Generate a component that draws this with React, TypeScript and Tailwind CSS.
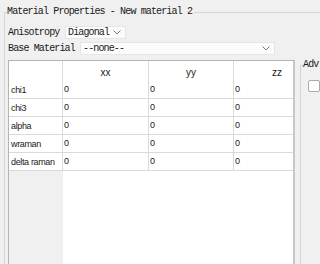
import React from "react";

const mono = "font-['Liberation_Mono',monospace] text-[10px] tracking-[-0.86px]";
const sans = "font-['Liberation_Sans',sans-serif] text-[9px] tracking-[-0.35px]";
const head = "font-['Liberation_Sans',sans-serif] text-[10px]";

function Chevron() {
  return (
    <svg width="8" height="5" viewBox="0 0 8 5" className="shrink-0">
      <path d="M0.5 0.5 L4 4 L7.5 0.5" fill="none" stroke="#7a7a7a" strokeWidth="1" />
    </svg>
  );
}

function Combo({ text, width }: { text: string; width: string }) {
  return (
    <div
      className={`${width} h-[13px] flex items-center justify-between pl-[2px] pr-[4px] bg-[#fbfbfb] border border-[#e6e6e6]`}
    >
      <span className={`${mono} leading-[13px]`}>{text}</span>
      <Chevron />
    </div>
  );
}

const rows = ["chi1", "chi3", "alpha", "wraman", "delta raman"];

function Table() {
  return (
    <div className="mt-[2px] w-[287px] h-[220px] flex flex-col bg-white border-l border-t border-[#b4b4b4] border-r-2 border-r-[#c6c6cb]">
      <div className="flex h-[20px] shrink-0">
        <div className="w-[54px] border-r border-[#dadada]" />
        <div className={`w-[86px] border-r border-[#dadada] flex items-center justify-center pt-[2px] ${head}`}>xx</div>
        <div className={`w-[85px] border-r border-[#dadada] flex items-center justify-center pt-[2px] ${head}`}>yy</div>
        <div className={`flex-1 flex items-center justify-end pr-[11px] pt-[2px] ${head}`}>zz</div>
      </div>
      {rows.map((r) => (
        <div key={r} className="flex h-[18px] shrink-0 border-b border-[#dadada]">
          <div className={`w-[54px] border-r border-[#dadada] flex items-center pl-[2px] pt-[2px] ${sans}`}>{r}</div>
          <div className={`w-[86px] border-r border-[#dadada] flex items-center pl-[1px] pt-[1px] ${sans}`}>0</div>
          <div className={`w-[85px] border-r border-[#dadada] flex items-center pl-[1px] pt-[1px] ${sans}`}>0</div>
          <div className={`flex-1 flex items-center pl-[1px] pt-[1px] ${sans}`}>0</div>
        </div>
      ))}
      <div className="flex flex-1">
        <div className="w-[54px] bg-[#f0f0f0]" />
        <div className="flex-1 bg-white" />
      </div>
    </div>
  );
}

export default function App() {
  return (
    <div className="w-[320px] h-[264px] overflow-hidden bg-[#f0f0f0] text-[#1a1a1a]">
      <div className="pt-[5px] pl-[4px] w-[340px]">
        <fieldset className="border-l border-t border-[#d6d6d6] h-[300px]">
          <legend className={`ml-[2px] pr-[2px] h-[14px] leading-[14px] ${mono}`}>
            Material Properties - New material 2
          </legend>
          <div className="pl-[3px] mt-[7px] flex flex-col gap-[3px]">
            <div className="flex items-center h-[13px]">
              <span className={`w-[57px] ${mono}`}>Anisotropy</span>
              <Combo text="Diagonal" width="w-[61px]" />
            </div>
            <div className="flex items-center h-[13px]">
              <span className={`w-[72px] ${mono}`}>Base Material</span>
              <Combo text="--none--" width="w-[195px]" />
            </div>
          </div>
          <div className="mt-[3px] pl-[3px] flex items-start">
            <Table />
            <fieldset className="ml-[5px] w-[40px] h-[220px] border-l border-t border-[#d6d6d6]">
              <legend className={`ml-[2px] pr-[2px] h-[14px] leading-[14px] ${mono}`}>Adv</legend>
              <div className="ml-[7px] mt-[8px] w-[12px] h-[12px] rounded-[2px] bg-white border border-[#a9a9a9]" />
            </fieldset>
          </div>
        </fieldset>
      </div>
    </div>
  );
}
